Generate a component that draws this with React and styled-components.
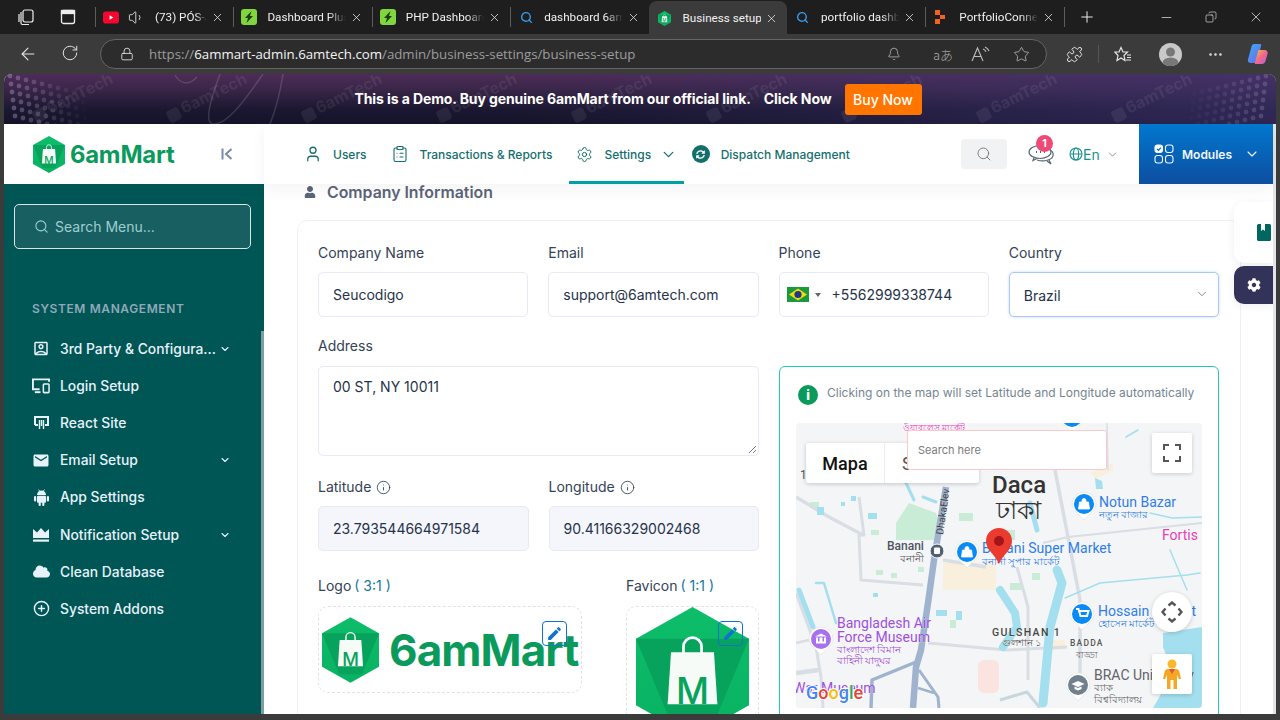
import React from 'react';
import styled, { createGlobalStyle } from 'styled-components';
import {
  ArrowLeft, Bell, ChevronDown, CirclePlus, ClipboardList, Copy, Ellipsis, Info, Lock, Minus,
  Plus, Puzzle, RotateCw, Search, Settings, Star, User, Volume1, X,
} from 'lucide-react';
import { FaCloud, FaCog, FaSyncAlt, FaUser } from 'react-icons/fa';
import { MdEdit, MdEmail, MdOutlineAccountBox } from 'react-icons/md';

const GlobalStyle = createGlobalStyle`
  html, body { margin: 0; padding: 0; height: 100%; overflow: hidden; background: #3b3b3b; }
  * { box-sizing: border-box; }
  body { font-family: Inter, "Liberation Sans", sans-serif; }
`;

const Window = styled.div`
  width: 1280px;
  height: 720px;
  display: flex;
  flex-direction: column;
  background: #3b3b3b;
  overflow: hidden;
`;

/* browser chrome */
const TabStrip = styled.div`
  height: 34px;
  flex: none;
  display: flex;
  align-items: center;
  background: #1e1e1e;
  color: #f1f1f1;
  font-family: Roboto, "Noto Sans", sans-serif;
  font-size: 11.7px;
`;
const StripIcons = styled.div`
  width: 95px;
  flex: none;
  display: flex;
  gap: 25px;
  padding-left: 17px;
  align-items: center;
`;
const TabItem = styled.div`
  width: 138.4px;
  height: ${p => (p.$active ? '34px' : '20px')};
  margin-top: ${p => (p.$active ? '2px' : '0')};
  flex: none;
  display: flex;
  align-items: center;
  gap: 8px;
  padding: 0 9px 0 7px;
  background: ${p => (p.$active ? '#3b3b3b' : 'transparent')};
  border-radius: ${p => (p.$active ? '8px 8px 0 0' : '0')};
  border-left: 1px solid ${p => (p.$sep ? '#5c5c5c' : 'transparent')};
`;
const TabTitle = styled.span`
  flex: 1;
  min-width: 0;
  white-space: nowrap;
  overflow: hidden;
  margin: 0 -4px 0 2px;
  -webkit-mask-image: ${p => (p.$fade ? 'linear-gradient(90deg, #000 78%, transparent)' : 'none')};
`;
const FavIcon = styled.span`
  width: 16px;
  height: 16px;
  flex: none;
  display: flex;
  align-items: center;
  justify-content: center;
`;
const SpeakerIcon = styled(Volume1)`
  flex: none;
  margin-left: 1px;
`;
const CloseIcon = styled(X)`
  flex: none;
`;
const RestoreIcon = styled(Copy)`
  transform: scaleX(-1);
`;
const WinControls = styled.div`
  margin-left: auto;
  display: flex;
  align-items: center;
  gap: 31px;
  padding-right: 16px;
`;
const NewTab = styled.div`
  padding-left: 13px;
  border-left: 1px solid #5c5c5c;
  height: 20px;
  display: flex;
  align-items: center;
`;
const Toolbar = styled.div`
  height: 40px;
  flex: none;
  display: flex;
  align-items: center;
  padding: 0 10px 0 18px;
  color: #e6e6e6;
`;
const NavIcons = styled.div`
  width: 82px;
  display: flex;
  gap: 23px;
`;
const UrlPill = styled.div`
  width: 947px;
  height: 30px;
  flex: none;
  display: flex;
  align-items: center;
  padding: 0 16px 0 19px;
  border: 1px solid #656565;
  border-radius: 15px;
  background: #2c2c2c;
  font-family: "Open Sans", "Noto Sans", sans-serif;
  font-size: 13.25px;
  color: #9c9c9c;
`;
const UrlText = styled.span`
  margin-left: 15px;
  flex: 1;
  white-space: nowrap;
  b { font-weight: 400; color: #f4f4f4; }
`;
const UrlActions = styled.div`
  display: flex;
  align-items: center;
  gap: 20px;
  color: #bdbdbd;
`;
const TranslateGlyph = styled.span`
  font-family: "Noto Sans CJK JP", sans-serif;
  font-size: 13px;
  font-weight: 300;
  width: 18px;
  margin-left: 12px;
  white-space: nowrap;
  color: #a8a8a8;
`;
const ToolSlot = styled.span`
  display: flex;
  flex: none;
  margin-left: ${p => p.$ml}px;
`;
const ToolSep = styled.span`
  width: 1px;
  height: 18px;
  margin-left: 15px;
  background: #555;
`;
const Avatar = styled.span`
  width: 23px;
  height: 23px;
  margin-left: 27px;
  border-radius: 50%;
  background: #c9c9c9;
  flex: none;
  display: flex;
  align-items: center;
  justify-content: center;
  overflow: hidden;
`;

/* page */
const Viewport = styled.div`
  flex: 1;
  min-height: 0;
  margin: 0 4px 6px;
  display: flex;
  flex-direction: column;
  overflow: hidden;
  border-radius: 8px 8px 0 0;
  background: #fff;
`;
const Banner = styled.div`
  position: relative;
  height: 50px;
  flex: none;
  display: flex;
  align-items: center;
  justify-content: center;
  gap: 13px;
  padding-right: 4px;
  overflow: hidden;
  background:
    linear-gradient(90deg, transparent 40%, rgba(62, 52, 112, 0.6) 100%),
    linear-gradient(180deg, #4d2c58 0%, #3a2648 30%, #1a1730 72%, #15132a 100%);
  color: #fff;
  font-size: 14px;
  font-weight: 700;
`;
const BannerArt = styled.svg`
  position: absolute;
  inset: 0;
`;
const BannerText = styled.span`
  position: relative;
  display: flex;
  gap: 13px;
  padding-bottom: 1px;
  letter-spacing: -0.1px;
`;
const BuyNow = styled.span`
  position: relative;
  width: 77px;
  height: 31px;
  display: flex;
  align-items: center;
  justify-content: center;
  background: #ff7500;
  border-radius: 3px;
  font-size: 14px;
  font-weight: 500;
`;
const Shell = styled.div`
  flex: 1;
  min-height: 0;
  display: flex;
`;
const Side = styled.aside`
  width: 260px;
  flex: none;
  display: flex;
  flex-direction: column;
`;
const Brand = styled.div`
  height: 60px;
  flex: none;
  display: flex;
  align-items: center;
  padding-left: 29px;
  gap: 5px;
  background: #fff;
  color: #7b8aa8;
`;
const BrandName = styled.span`
  font-size: 23.8px;
  font-weight: 700;
  color: #0a9a5c;
  letter-spacing: -0.2px;
  width: 144px;
`;
const SideBody = styled.div`
  position: relative;
  flex: 1;
  background: #005555;
  padding: 20px 13px 0 10px;
  overflow: hidden;
`;
const SideBar = styled.span`
  position: absolute;
  right: 0;
  top: 147px;
  bottom: 0;
  width: 3px;
  background: #7c9ea2;
`;
const SideSearch = styled.div`
  height: 45px;
  display: flex;
  align-items: center;
  gap: 6px;
  padding-left: 19px;
  border: 1px solid #d9e6e6;
  border-radius: 5px;
  background: #175f60;
  color: #9fcdd0;
  font-size: 14px;
`;
const SideTitle = styled.div`
  margin: 52px 0 13px 18px;
  font-size: 12px;
  line-height: 16px;
  font-weight: 600;
  letter-spacing: 0.6px;
  color: #8fa9b8;
`;
const SideItem = styled.div`
  height: 37.2px;
  display: flex;
  align-items: center;
  padding-left: 18px;
  color: #e8f2fb;
  font-size: 13.85px;
  font-weight: 500;
`;
const SideIcon = styled.span`
  width: 18px;
  height: 18px;
  margin-right: 10px;
  flex: none;
  display: flex;
  align-items: center;
  justify-content: center;
`;
const SideLabel = styled.span`
  flex: 1;
`;
const SideChevron = styled.span`
  width: 12px;
  margin-right: 20px;
  display: flex;
`;
const Main = styled.div`
  position: relative;
  flex: 1;
  min-width: 0;
  display: flex;
  flex-direction: column;
  border-right: 3px solid #e2e4e7;
`;
const TopNav = styled.nav`
  position: relative;
  z-index: 2;
  height: 60px;
  flex: none;
  display: flex;
  align-items: center;
  background: #fff;
  box-shadow: 0 6px 14px rgba(30, 40, 60, 0.05);
`;
const NavLinks = styled.div`
  display: flex;
  align-items: stretch;
  height: 60px;
  padding-left: 40px;
`;
const NavLink = styled.div`
  display: flex;
  align-items: center;
  gap: 11px;
  margin-right: ${p => p.$mr || 0}px;
  padding: ${p => (p.$active ? '0 6.5px 0 7px' : '0')};
  border-bottom: 3px solid ${p => (p.$active ? '#00a0a5' : 'transparent')};
  border-top: 3px solid transparent;
  color: #146f6c;
  font-size: 12px;
  font-weight: 500;
  white-space: nowrap;
`;
const SettingsChevron = styled(ChevronDown)`
  margin-left: -2px;
`;
const DispatchDot = styled.span`
  width: 18px;
  height: 18px;
  border-radius: 50%;
  background: #146f6c;
  color: #fff;
  display: flex;
  align-items: center;
  justify-content: center;
`;
const HeaderTools = styled.div`
  margin-left: auto;
  display: flex;
  align-items: center;
  height: 60px;
`;
const SearchBtn = styled.span`
  width: 46px;
  height: 30px;
  margin-right: 21px;
  border-radius: 4px;
  background: #f1f2f4;
  color: #7a7f87;
  display: flex;
  align-items: center;
  justify-content: center;
`;
const ChatWrap = styled.span`
  position: relative;
  width: 28px;
  height: 24px;
  margin-right: 13px;
  margin-top: 4px;
`;
const Badge = styled.span`
  position: absolute;
  top: -9px;
  left: 8px;
  width: 17px;
  height: 17px;
  border-radius: 50%;
  background: #ef4a75;
  color: #fff;
  font-size: 10.5px;
  font-weight: 700;
  display: flex;
  align-items: center;
  justify-content: center;
`;
const Lang = styled.span`
  display: flex;
  align-items: center;
  color: #16938f;
  font-size: 14px;
  width: 70px;
`;
const LangChevron = styled.span`
  margin-left: 6px;
  color: #6f7a86;
  display: flex;
`;
const Modules = styled.div`
  width: 134px;
  height: 60px;
  display: flex;
  align-items: center;
  padding-left: 15px;
  gap: 8px;
  background: linear-gradient(180deg, #0178cf, #0d4ea0);
  color: #f2f8ff;
  font-size: 12px;
  font-weight: 600;
`;
const ModulesChevron = styled.span`
  margin-left: 4px;
  display: flex;
`;
const Content = styled.div`
  position: relative;
  flex: 1;
  min-height: 0;
  overflow: hidden;
  padding: 0 32px 0 33px;
  background: #fff;
`;
const SectionTitle = styled.div`
  display: flex;
  align-items: center;
  gap: 11px;
  height: 20px;
  margin: -2px 0 18px 7px;
  color: #5b6478;
  font-size: 15.85px;
  font-weight: 600;
`;
const Card = styled.section`
  border: 1px solid #eef0f5;
  border-radius: 10px;
  padding: 22px 21px 0 20px;
`;
const FourCols = styled.div`
  display: grid;
  grid-template-columns: repeat(4, 1fr);
  gap: 20px;
`;
const TwoCols = styled.div`
  display: grid;
  grid-template-columns: 1fr 1fr;
  gap: 20px;
  margin-top: ${p => p.$mt || 0}px;
`;
const Label = styled.div`
  height: 20px;
  margin-bottom: ${p => p.$mb ?? 9}px;
  line-height: 20px;
  display: flex;
  align-items: center;
  gap: 5px;
  font-size: 14px;
  color: #334257;
  white-space: nowrap;
`;
const Ratio = styled.span`
  color: #16789a;
  margin-left: -2px;
`;
const Input = styled.div`
  position: relative;
  height: ${p => p.$h || 45}px;
  display: flex;
  align-items: ${p => (p.$top ? 'flex-start' : 'center')};
  padding: ${p => (p.$top ? '11px 14px' : p.$focus ? '2px 14px 0' : '0 14px')};
  border: 1px solid ${p => (p.$focus ? '#a9c7f7' : '#e7eaf3')};
  border-radius: 5px;
  background: ${p => (p.$muted ? '#f4f6fb' : '#fff')};
  box-shadow: ${p => (p.$focus ? '0 0 3px rgba(90,150,250,.35)' : 'none')};
  font-size: 14px;
  color: #26324a;
  white-space: nowrap;
`;
const PhoneInput = styled(Input)`
  padding-left: 7px;
  gap: 6px;
`;
const Grip = styled.svg`
  position: absolute;
  right: 1px;
  bottom: 1px;
`;
const Caret = styled.span`
  width: 0;
  height: 0;
  margin-right: 5px;
  border: 3px solid transparent;
  border-top: 4px solid #666;
  border-bottom: 0;
`;
const SelectChevron = styled.span`
  margin-left: auto;
  margin-right: -5px;
  margin-top: -3px;
  color: #6f7a86;
  display: flex;
`;
const ImageRow = styled.div`
  display: flex;
  gap: 44px;
  margin-top: 25px;
`;
const DropBox = styled.div`
  position: relative;
  width: ${p => p.$w}px;
  height: ${p => p.$h}px;
  display: flex;
  align-items: ${p => (p.$top ? 'flex-start' : 'center')};
  justify-content: ${p => (p.$top ? 'center' : 'flex-start')};
  padding-left: ${p => (p.$top ? '0' : '3px')};
  gap: 10px;
  border: 1px dashed #e2e2e2;
  border-radius: 10px;
`;
const LogoWord = styled.span`
  font-size: 44px;
  font-weight: 700;
  color: #0a9a5c;
  letter-spacing: -0.9px;
  line-height: 1;
`;
const EditBtn = styled.span`
  position: absolute;
  top: 14px;
  right: ${p => p.$right}px;
  width: 25px;
  height: 25px;
  border: 1px solid #1073d0;
  border-radius: 4px;
  color: #1073d0;
  display: flex;
  align-items: center;
  justify-content: center;
`;
const MapCard = styled.div`
  height: 400px;
  margin-top: 30px;
  padding: 16px;
  border: 1px solid #1fcdb0;
  border-radius: 6px;
`;
const MapHint = styled.div`
  height: 24px;
  margin: 0 0 16px 2px;
  display: flex;
  align-items: center;
  gap: 9px;
  color: #758590;
  font-size: 12px;
  white-space: nowrap;
`;
const HintText = styled.span`
  padding-bottom: 6px;
`;
const InfoDot = styled.span`
  width: 20px;
  height: 20px;
  border-radius: 50%;
  background: #0a9a5c;
  color: #fff;
  flex: none;
  display: flex;
  align-items: center;
  justify-content: center;
  font-size: 13px;
  font-weight: 800;
`;
const MapBox = styled.div`
  position: relative;
  height: 285px;
  overflow: hidden;
  border-radius: 4px;
  background: #f4f5f6;
  font-family: Roboto, "Liberation Sans", sans-serif;
`;
const MapCanvas = styled.svg`
  display: block;
`;
const MapTypes = styled.div`
  position: absolute;
  left: 10px;
  top: 20px;
  width: 173px;
  height: 40px;
  display: flex;
  align-items: center;
  background: #fff;
  box-shadow: 0 1px 4px rgba(0, 0, 0, 0.2);
  border-radius: 2px;
  font-size: 18px;
  color: #111;
`;
const MapType = styled.span`
  width: 79px;
  height: 40px;
  display: flex;
  align-items: center;
  justify-content: center;
  font-weight: ${p => (p.$on ? 500 : 400)};
  border-right: 1px solid #ececec;
`;
const MapSatellite = styled.span`
  padding-left: 17px;
  color: #555;
`;
const MapSearch = styled.div`
  position: absolute;
  left: 111px;
  top: 7px;
  width: 200px;
  height: 40px;
  display: flex;
  align-items: center;
  padding-left: 10px;
  background: #fff;
  border: 1px solid #fbc9c9;
  border-radius: 3px;
  font-family: Inter, sans-serif;
  font-size: 11px;
  color: #7b7b7b;
`;
const MapBtn = styled.span`
  position: absolute;
  left: 356px;
  top: ${p => p.$top}px;
  width: 40px;
  height: 40px;
  display: flex;
  align-items: center;
  justify-content: center;
  background: #fff;
  border-radius: ${p => (p.$round ? '50%' : '2px')};
  box-shadow: 0 1px 4px rgba(0, 0, 0, 0.18);
`;
const FloatPanel = styled.div`
  position: absolute;
  right: 0;
  top: ${p => p.$top}px;
  width: 39px;
  height: ${p => p.$h}px;
  display: flex;
  align-items: center;
  justify-content: ${p => (p.$end ? 'flex-end' : 'center')};
  padding-right: ${p => (p.$end ? '2px' : '0')};
  border-radius: 10px 0 0 10px;
  background: ${p => p.$bg};
  color: ${p => p.$fg};
  box-shadow: 0 2px 8px rgba(30, 40, 60, 0.08);
`;
const HexSvg = styled.svg`
  flex: none;
`;

function HexLogo({ w, h }) {
  const id = `hex${w}`;
  return (
    <HexSvg width={w} height={h} viewBox="0 0 100 115">
      <defs>
        <linearGradient id={id} x1="0" y1="0" x2="0" y2="1">
          <stop offset="0" stopColor="#0dbd69" />
          <stop offset="1" stopColor="#08b262" />
        </linearGradient>
      </defs>
      <polygon points="50,0 100,28 100,87 50,115 0,87 0,28" fill={`url(#${id})`} />
      <polygon points="0,28 100,28 70,100 30,100" fill="#07a35c" />
      <path d="M42 42 V35 a8 8 0 0 1 16 0 V42" fill="none" stroke="#fff" strokeWidth="2.4" />
      <polygon points="31,40 69,40 72,86 28,86" fill="#f6fbf8" />
      <text x="50" y="86" textAnchor="middle" fontFamily="Inter, sans-serif" fontWeight="500" fontSize="32" fill="#07a35c">M</text>
    </HexSvg>
  );
}

function CopilotIcon() {
  return (
    <svg width="24" height="24" viewBox="0 0 24 24">
      <defs>
        <linearGradient id="copA" x1="0" y1="0" x2="1" y2="1">
          <stop offset="0" stopColor="#2fb6f0" />
          <stop offset="1" stopColor="#7a5cf0" />
        </linearGradient>
        <linearGradient id="copB" x1="0" y1="0" x2="1" y2="1">
          <stop offset="0" stopColor="#f5c332" />
          <stop offset="0.5" stopColor="#f0698a" />
          <stop offset="1" stopColor="#b25ce0" />
        </linearGradient>
      </defs>
      <path d="M8 2 h6 c1 0 1.5.6 1.2 1.6 L11 19 c-.4 1.4-1.2 2-2.4 2 H5 c-2.5 0-3.6-1.6-3-3.6 L5.5 4.5 C6 3 6.8 2 8 2z" fill="url(#copA)" />
      <path d="M13 8 h5 c2.5 0 4.2 1.6 3.6 3.8 L19.5 19 c-.5 1.8-1.8 3-3.6 3 H10 c-1 0-1.4-.7-1-1.6 L12 9.5 C12.2 8.6 12.4 8 13 8z" fill="url(#copB)" />
    </svg>
  );
}

const MapText = ({ x, y, c = '#2f7de8', s = 14, w = 400, ls, children }) => (
  <text x={x} y={y} fill={c} fontSize={s} fontWeight={w} letterSpacing={ls} stroke="#fff" strokeWidth="0.25" paintOrder="stroke">{children}</text>
);

const MapPin = ({ x, y, c, glyph }) => (
  <g transform={`translate(${x} ${y})`}>
    <path d="M-12 0 a12 12 0 1 1 24 0 c0 6-7 10-12 16 c-5-6-12-10-12-16z" fill="#fff" stroke="#d8d8d8" strokeWidth="0.5" />
    <circle r="10" fill={c} />
    {glyph === 'bag' && <path d="M-4.5 -2 h9 l1 7 h-11z M-2 -2 v-1.5 a2 2 0 0 1 4 0 v1.5" fill="#fff" stroke="#fff" strokeWidth="0.8" />}
    {glyph === 'cart' && <path d="M-6 -5 h2.5 l2 7 h6.5 l1.5-5 h-9 M-1.5 5 h.1 M3.5 5 h.1" fill="none" stroke="#fff" strokeWidth="2" />}
    {glyph === 'museum' && <path d="M-5 4.5 h10 v-6 h-2 v4 h-1.5 v-4 h-3 v4 h-1.5 v-4 h-2z M-6 -2.5 l6-3 l6 3z" fill="#fff" />}
    {glyph === 'school' && <path d="M-6.5 -1 l6.5-3 l6.5 3 l-6.5 3z M-3.5 1.5 v2.5 l3.5 1.5 l3.5-1.5 v-2.5 l-3.5 1.5z" fill="#fff" />}
  </g>
);

function MapArt() {
  return (
    <MapCanvas width="406" height="285" viewBox="0 0 406 285">
      {/* land use */}
      <polygon points="100,100 113,80 140,90 143,100 138,117 100,117" fill="#c8ecd5" />
      <rect x="147" y="140" width="53" height="27" fill="#f8efdc" />
      <rect x="182" y="237" width="21" height="33" rx="6" fill="#fbe3df" />
      <rect x="257" y="217" width="12" height="10" fill="#f8efdc" />
      <polygon points="294,50 317,40 317,47 300,56" fill="#f8efdc" />
      <g fill="#c8ecd5">
        <rect x="163" y="90" width="14" height="8" /><rect x="205" y="107" width="14" height="10" />
        <rect x="80" y="147" width="7" height="5" /><rect x="95" y="150" width="6" height="5" />
        <rect x="122" y="144" width="6" height="5" /><rect x="75" y="107" width="8" height="5" />
        <rect x="14" y="79" width="9" height="6" /><rect x="214" y="160" width="13" height="7" />
        <rect x="236" y="150" width="8" height="7" /><rect x="154" y="197" width="6" height="8" />
      </g>
      {/* grey roads */}
      <g fill="none" stroke="#d8dee4" strokeWidth="2.5" strokeLinejoin="round">
        <polyline points="0,74 33,94 67,112" strokeWidth="3.5" />
        <polyline points="63,74 68,112 63,112 65,157 127,162" strokeWidth="3" />
        <polyline points="259,47 272,114 284,177 284,250" strokeWidth="3.5" />
        <polyline points="147,137 190,144" strokeWidth="3.5" />
        <polyline points="247,120 272,114 406,100" strokeWidth="2" />
        <polyline points="132,220 210,227 271,224" strokeWidth="3" />
        <polyline points="221,144 232,184 232,257" strokeWidth="3" />
        <polyline points="0,170 20,224 25,254 27,285" strokeWidth="3" />
        <polyline points="0,250 23,247" strokeWidth="4.5" />
        <polyline points="0,220 13,217" strokeWidth="2.5" />
        <polyline points="311,0 312,47" strokeWidth="1.5" />
      </g>
      {/* water */}
      <g fill="none" stroke="#a3dfee" strokeLinejoin="round" strokeLinecap="round">
        <polyline points="234,80 241,107" strokeWidth="5" />
        <polyline points="204,167 219,190 221,204 207,224" strokeWidth="8" />
        <polyline points="261,147 266,160 254,204 247,280" strokeWidth="9" />
        <polyline points="269,175 304,160 391,152 404,150" strokeWidth="1.5" />
        <polyline points="354,90 376,95 406,94" strokeWidth="1.5" />
        <polyline points="374,127 391,167" strokeWidth="1.5" />
        <polyline points="20,160 28,160 40,200" strokeWidth="2.5" />
        <polyline points="3,167 17,204" strokeWidth="5" />
        <polyline points="330,14 342,7" strokeWidth="1.5" />
        <polyline points="110,60 118,77" strokeWidth="3" />
        <polyline points="127,74 140,79" strokeWidth="3" />
      </g>
      <polygon points="367,210 406,204 406,285 357,285 377,250 367,224" fill="#a3dfee" />
      <polygon points="299,55 306,58 307,66 300,66" fill="#a3dfee" />
      <g fill="#a3dfee">
        <rect x="72" y="90" width="9" height="6" /><rect x="21" y="84" width="7" height="8" />
        <rect x="45" y="79" width="4" height="4" /><rect x="55" y="73" width="5" height="5" />
        <rect x="77" y="170" width="5" height="4" /><rect x="160" y="188" width="6" height="9" />
        <rect x="140" y="187" width="11" height="6" />
      </g>
      {/* elevated expressway */}
      <g fill="none" stroke="#9fb3cf" strokeLinejoin="round">
        <polyline points="150,64 138,137 132,180 125,227 120,244 117,285" strokeWidth="6.5" />
        <polyline points="120,239 76,257 75,285" strokeWidth="3.5" />
        <polyline points="123,247 142,274 143,285" strokeWidth="3" />
        <polyline points="122,265 138,270" strokeWidth="2.5" />
        <polyline points="108,0 125,-8" strokeWidth="4" />
        <polyline points="204,277 231,269 244,285" strokeWidth="3" stroke="#c8d6de" />
      </g>
      <text transform="translate(147 112) rotate(-82)" fontSize="10" fill="#444">DhakaElev</text>
      <text x="4" y="56" fontSize="12" fill="#555">1</text>

      <MapText x={107} y={8} c="#e83eb5" s={9}>ওয়ারলেস মার্কেট</MapText>
      <MapPin x={276} y={-6} c="#0a8af5" glyph="bag" />

      <text x="196" y="70" fontSize="24" fontWeight="500" fill="#333">Daca</text>
      <text x="200" y="96" fontSize="25" fill="#333">ঢাকা</text>

      <MapPin x={288} y={81} c="#0a8af5" glyph="bag" />
      <MapText x={303} y={84}>Notun Bazar</MapText>
      <MapText x={303} y={95} s={10}>নতুন বাজার</MapText>
      <MapText x={366} y={117} c="#e83eb5">Fortis</MapText>

      <MapText x={91} y={127} c="#4a5560" s={12} w={500}>Banani</MapText>
      <MapText x={104} y={139} c="#555" s={10}>বনানী</MapText>
      <circle cx="141" cy="128" r="7" fill="#4f6272" stroke="#fff" />
      <rect x="138" y="124.5" width="6" height="6.5" rx="1" fill="#fff" />

      <MapPin x={171} y={129} c="#0a8af5" glyph="bag" />
      <MapText x={186} y={130}>Banani Super Market</MapText>
      <MapText x={186} y={142} s={10}>বনানী সুপার মার্কেট</MapText>

      <path d="M203 141 C199 131 190 127 190 118 a13 13 0 0 1 26 0 C216 127 207 131 203 141z" fill="#ea3b2e" />
      <circle cx="203" cy="118" r="5" fill="#a5141a" />

      <MapPin x={286} y={191} c="#0a8af5" glyph="cart" />
      <MapText x={302} y={193}>Hossain Market</MapText>
      <MapText x={302} y={204} s={10}>হোসেন মার্কেট</MapText>

      <MapPin x={25} y={216} c="#a970ee" glyph="museum" />
      <MapText x={41} y={205} c="#9c4fe0">Bangladesh Air</MapText>
      <MapText x={41} y={219} c="#9c4fe0">Force Museum</MapText>
      <MapText x={41} y={230} c="#9c4fe0" s={10}>বাংলাদেশ বিমান</MapText>
      <MapText x={41} y={241} c="#9c4fe0" s={10}>বাহিনী যাদুঘর</MapText>

      <MapText x={196} y={213} c="#444" s={10.5} w={500} ls={1.4}>GULSHAN 1</MapText>
      <MapText x={206} y={223} c="#555" s={10}>গুলশান ১</MapText>
      <MapText x={274} y={223} c="#555" s={8.5} w={500} ls={1.2}>BADDA</MapText>
      <MapText x={280} y={235} c="#666" s={9}>বাড্ডা</MapText>

      <MapPin x={282} y={262} c="#70808c" glyph="school" />
      <MapText x={298} y={257} c="#5f6368">BRAC University</MapText>
      <MapText x={298} y={268} c="#5f6368" s={10}>ব্যাক</MapText>
      <MapText x={298} y={280} c="#5f6368" s={10}>বিশ্ববিদ্যালয়</MapText>

      <MapText x={-3} y={270} c="#9c4fe0">War Museum</MapText>
      <text x="10" y="276" fontSize="18" fontWeight="500" stroke="#fff" strokeWidth="2" paintOrder="stroke">
        <tspan fill="#4285f4">G</tspan><tspan fill="#ea4335">o</tspan><tspan fill="#fbbc05">o</tspan><tspan fill="#4285f4">g</tspan><tspan fill="#34a853">l</tspan><tspan fill="#ea4335">e</tspan>
      </text>
    </MapCanvas>
  );
}

function BannerBackdrop() {
  const marks = [46, 180, 315, 450, 585, 720, 855, 990, 1125];
  const rows = [0, 1, 2, 3, 4, 5];
  const cols = [0, 1, 2, 3, 4, 5, 6, 7, 8, 9];
  return (
    <BannerArt width="1272" height="50" viewBox="0 0 1272 50">
      {rows.map(r => cols.map(c => (
        <circle key={`l${r}${c}`} cx={6 + c * 8 + r} cy={2 + r * 8 + c * 2} r="2.4" fill="#c9b8e0" opacity={Math.max(0.02, 0.34 - c * 0.035)} />
      )))}
      {rows.map(r => cols.map(c => (
        <circle key={`r${r}${c}`} cx={1262 - c * 8 - r} cy={2 + r * 8 + c * 2} r="2.4" fill="#c9b8e0" opacity={Math.max(0.02, 0.22 - c * 0.022)} />
      )))}
      <g fill="none" stroke="#ffffff" strokeOpacity="0.14" strokeWidth="1.5">
        <path d="M171 1 C176 10 185 12 193 3" />
        <path d="M216 0 C205 30 200 50 210 50 C225 50 245 20 259 0" />
        <path d="M279 0 C276 20 272 35 266 50" />
      </g>
      <g fill="#ffffff" opacity="0.07" fontSize="16" fontWeight="700" fontFamily="Inter, sans-serif">
        {marks.map(x => (
          <g key={x} transform={`translate(${x} 40) rotate(-26)`}>
            <rect x="-16" y="-10" width="13" height="13" rx="3" />
            <text x="0" y="0">6amTech</text>
          </g>
        ))}
      </g>
    </BannerArt>
  );
}

const tabs = [
  { title: '(73) PÓS-JAVA', icon: 'yt', sep: true },
  { title: 'Dashboard Plus', icon: 'env', sep: true },
  { title: 'PHP Dashboard', icon: 'env', sep: true },
  { title: 'dashboard 6am', icon: 'search', sep: true },
  { title: 'Business setup', icon: 'six', active: true },
  { title: 'portfolio dashb', icon: 'search' },
  { title: 'PortfolioConne', icon: 'pc', sep: true },
];

function TabIcon({ kind }) {
  if (kind === 'search') return <Search size={13} color="#3b9bea" strokeWidth={2.6} />;
  if (kind === 'six') return <HexLogo w={13} h={15} />;
  if (kind === 'yt') {
    return (
      <svg width="17" height="13" viewBox="0 0 17 13">
        <rect width="17" height="13" rx="3" fill="#f5072f" />
        <polygon points="7,4 11,6.5 7,9" fill="#fff" />
      </svg>
    );
  }
  if (kind === 'env') {
    return (
      <svg width="16" height="16" viewBox="0 0 16 16">
        <rect width="16" height="16" rx="3" fill="#82d63d" />
        <path d="M10.5 2 L4 9 h3 l-1.5 5 L12 7 h-3z" fill="#1f3d12" />
      </svg>
    );
  }
  return (
    <svg width="12" height="14" viewBox="0 0 12 14">
      <rect x="0" y="0" width="5" height="5" fill="#f26322" /><rect x="5" y="5" width="5" height="4" fill="#f26322" /><rect x="0" y="9" width="5" height="5" fill="#f26322" />
    </svg>
  );
}

const menu = [
  { label: '3rd Party & Configura...', icon: <MdOutlineAccountBox size={19} />, more: true },
  { label: 'Login Setup', icon: (
    <svg width="19" height="16" viewBox="0 0 19 16" fill="none" stroke="currentColor">
      <path d="M8 11.5 H1 V1 H18 V3.5" strokeWidth="2" /><path d="M3 14.5 H9" strokeWidth="2" />
      <rect x="12" y="6" width="6" height="9" rx="0.8" strokeWidth="1.6" />
    </svg>
  ) },
  { label: 'React Site', icon: (
    <svg width="17" height="15" viewBox="0 0 17 15" fill="none" stroke="currentColor" strokeWidth="2">
      <path d="M2 10 V2 h13 v8 h-3 M2 10 h3" /><path d="M6.5 5 v9 M10.5 5 v9 M8.5 5 v6" strokeWidth="1.4" />
    </svg>
  ) },
  { label: 'Email Setup', icon: <MdEmail size={19} />, more: true },
  { label: 'App Settings', icon: (
    <svg width="15" height="17" viewBox="0 0 15 17" fill="currentColor">
      <path d="M3 6 a4.5 4.5 0 0 1 9 0z" /><rect x="3" y="6.8" width="9" height="7" rx="1" />
      <rect x="0" y="7" width="2.2" height="5.5" rx="1.1" /><rect x="12.8" y="7" width="2.2" height="5.5" rx="1.1" />
      <rect x="4.6" y="13" width="2.2" height="4" rx="1" /><rect x="8.2" y="13" width="2.2" height="4" rx="1" />
      <path d="M4.5 0.5 L6 2.5 M10.5 0.5 L9 2.5" stroke="currentColor" strokeWidth="0.8" />
    </svg>
  ) },
  { label: 'Notification Setup', icon: (
    <svg width="16" height="14" viewBox="0 0 16 14" fill="currentColor">
      <path d="M0 1 L4 4.5 L8 0 L12 4.5 L16 1 V10 H0z" /><rect y="11.5" width="16" height="2.2" />
    </svg>
  ), more: true },
  { label: 'Clean Database', icon: <FaCloud size={17} /> },
  { label: 'System Addons', icon: <CirclePlus size={17} strokeWidth={2} /> },
];

export default function App() {
  return (
    <Window>
      <GlobalStyle />
      <TabStrip>
        <StripIcons>
          <svg width="18" height="18" viewBox="0 0 18 18" fill="none" stroke="#eee" strokeWidth="1.2">
            <rect x="6" y="2" width="10" height="12" rx="2" /><path d="M4 4 v11 a1.5 1.5 0 0 0 1.5 1.5 H12" /><path d="M2 6 v8" />
          </svg>
          <svg width="16" height="16" viewBox="0 0 16 16" fill="none" stroke="#eee" strokeWidth="1.3">
            <rect x="1.5" y="1.5" width="13" height="13" rx="2" /><rect x="1.5" y="1.5" width="13" height="3" fill="#eee" />
          </svg>
        </StripIcons>
        {tabs.map(t => (
          <TabItem key={t.title} $active={t.active} $sep={t.sep}>
            <FavIcon><TabIcon kind={t.icon} /></FavIcon>
            {t.icon === 'yt' && <SpeakerIcon size={17} strokeWidth={1.2} />}
            <TabTitle $fade={!t.active}>{t.title}</TabTitle>
            <CloseIcon size={13} strokeWidth={1.4} />
          </TabItem>
        ))}
        <NewTab><Plus size={18} strokeWidth={1.3} /></NewTab>
        <WinControls>
          <Minus size={15} strokeWidth={1.1} />
          <RestoreIcon size={12} strokeWidth={1.2} />
          <X size={16} strokeWidth={1.1} />
        </WinControls>
      </TabStrip>
      <Toolbar>
        <NavIcons>
          <ArrowLeft size={20} strokeWidth={1.3} />
          <RotateCw size={18} strokeWidth={1.3} />
        </NavIcons>
        <UrlPill>
          <Lock size={14} strokeWidth={1.4} color="#eee" />
          <UrlText>https://<b>6ammart-admin.6amtech.com</b>/admin/business-settings/business-setup</UrlText>
          <UrlActions>
            <Bell size={14} strokeWidth={1.3} />
            <TranslateGlyph>aあ</TranslateGlyph>
            <svg width="22" height="16" viewBox="0 0 22 16" fill="none" stroke="currentColor" strokeWidth="1.1">
              <path d="M1 15 L6.5 2 L12 15 M3 10.5 h7" /><path d="M12 3 a4 4 0 0 1 3 3 M14 1 a7 7 0 0 1 4 4" />
            </svg>
            <Star size={17} strokeWidth={1.1} />
          </UrlActions>
        </UrlPill>
        <ToolSlot $ml={19}><Puzzle size={17} strokeWidth={1.4} /></ToolSlot>
        <ToolSep />
        <ToolSlot $ml={15}>
          <svg width="18" height="17" viewBox="0 0 18 17" fill="none" stroke="#e6e6e6" strokeWidth="1.2">
            <path d="M7 1.5 L9 6 h4.5 L10 9.5 L11 14.5 L7 12 L3 14.5 L4 9.5 L.8 6 H5z" /><path d="M13 9 h4 M13 11.5 h4 M12 14 h5" />
          </svg>
        </ToolSlot>
        <Avatar>
          <svg width="23" height="23" viewBox="0 0 23 23"><circle cx="11.5" cy="9" r="4.5" fill="#787878" /><ellipse cx="11.5" cy="20" rx="8" ry="5.5" fill="#787878" /></svg>
        </Avatar>
        <ToolSlot $ml={25}><Ellipsis size={17} strokeWidth={1.6} /></ToolSlot>
        <ToolSlot $ml={22}><CopilotIcon /></ToolSlot>
      </Toolbar>
      <Viewport>
        <Banner>
          <BannerBackdrop />
          <BannerText>
            <span>This is a Demo. Buy genuine 6amMart from our official link.</span>
            <span>Click Now</span>
          </BannerText>
          <BuyNow>Buy Now</BuyNow>
        </Banner>
        <Shell>
          <Side>
            <Brand>
              <HexLogo w={32} h={37} />
              <BrandName>6amMart</BrandName>
              <svg width="16" height="16" viewBox="0 0 16 16" fill="none" stroke="currentColor" strokeWidth="2">
                <path d="M3.5 2.5 v11" /><path d="M12.5 3 L7 8 L12.5 13" />
              </svg>
            </Brand>
            <SideBody>
              <SideBar />
              <SideSearch><Search size={15} strokeWidth={1.8} />Search Menu...</SideSearch>
              <SideTitle>SYSTEM MANAGEMENT</SideTitle>
              {menu.map(m => (
                <SideItem key={m.label}>
                  <SideIcon>{m.icon}</SideIcon>
                  <SideLabel>{m.label}</SideLabel>
                  {m.more && <SideChevron><ChevronDown size={12} strokeWidth={2.2} /></SideChevron>}
                </SideItem>
              ))}
            </SideBody>
          </Side>
          <Main>
            <TopNav>
              <NavLinks>
                <NavLink $mr={24}><User size={18} strokeWidth={1.7} />Users</NavLink>
                <NavLink $mr={17}><ClipboardList size={18} strokeWidth={1.5} />Transactions &amp; Reports</NavLink>
                <NavLink $active $mr={8}>
                  <Settings size={17} strokeWidth={1.4} />Settings
                  <SettingsChevron size={17} strokeWidth={1.8} />
                </NavLink>
                <NavLink><DispatchDot><FaSyncAlt size={9} /></DispatchDot>Dispatch Management</NavLink>
              </NavLinks>
              <HeaderTools>
                <SearchBtn><Search size={16} strokeWidth={1.5} /></SearchBtn>
                <ChatWrap>
                  <svg width="28" height="24" viewBox="0 0 28 24" fill="none" stroke="#5a6675" strokeWidth="1.2">
                    <ellipse cx="12" cy="8" rx="11" ry="6.5" fill="#fff" /><path d="M6 13.5 l-1 3 l4-2" />
                    <path d="M22 6 c4 2 5 8 -2 10 c-3 1-8 1-11 0" /><path d="M21 16 l2 4 l-4-3" />
                    <path d="M8 8 h1 M12 8 h1 M16 8 h1" strokeWidth="1.8" />
                  </svg>
                  <Badge>1</Badge>
                </ChatWrap>
                <Lang>
                  <svg width="14" height="14" viewBox="0 0 14 14" fill="none" stroke="currentColor" strokeWidth="1.1">
                    <circle cx="7" cy="7" r="6" /><ellipse cx="7" cy="7" rx="2.6" ry="6" /><path d="M1 7 h12" />
                  </svg>
                  En
                  <LangChevron><ChevronDown size={13} strokeWidth={1.5} /></LangChevron>
                </Lang>
                <Modules>
                  <svg width="20" height="20" viewBox="0 0 20 20" fill="none" stroke="currentColor" strokeWidth="1.1">
                    <rect x="1" y="1" width="7.5" height="7.5" rx="2.5" fill="#fff" />
                    <path d="M3 4.8 l1.5 1.5 l2.4-2.6" stroke="#0c63b8" strokeWidth="1.2" />
                    <rect x="11.5" y="1" width="7.5" height="7.5" rx="2.5" />
                    <rect x="1" y="11.5" width="7.5" height="7.5" rx="2.5" />
                    <rect x="11.5" y="11.5" width="7.5" height="7.5" rx="2.5" />
                  </svg>
                  Modules
                  <ModulesChevron><ChevronDown size={16} strokeWidth={1.7} /></ModulesChevron>
                </Modules>
              </HeaderTools>
            </TopNav>
            <Content>
              <SectionTitle><FaUser size={12} />Company Information</SectionTitle>
              <Card>
                <FourCols>
                  <div><Label>Company Name</Label><Input>Seucodigo</Input></div>
                  <div><Label>Email</Label><Input>support@6amtech.com</Input></div>
                  <div>
                    <Label>Phone</Label>
                    <PhoneInput>
                      <svg width="22" height="15" viewBox="0 0 22 15">
                        <rect width="22" height="15" fill="#1a9a3c" />
                        <polygon points="11,1.5 20,7.5 11,13.5 2,7.5" fill="#f5d90a" />
                        <circle cx="11" cy="7.5" r="3.6" fill="#1c3a8a" />
                      </svg>
                      <Caret />
                      +5562999338744
                    </PhoneInput>
                  </div>
                  <div>
                    <Label>Country</Label>
                    <Input $focus>Brazil<SelectChevron><ChevronDown size={14} strokeWidth={1.5} /></SelectChevron></Input>
                  </div>
                </FourCols>
                <TwoCols $mt={19}>
                  <div>
                    <Label $mb={10}>Address</Label>
                    <Input $h={90} $top>
                      00 ST, NY 10011
                      <Grip width="9" height="9" viewBox="0 0 9 9" stroke="#777" strokeWidth="1">
                        <path d="M1 8 L8 1 M5 8 L8 5" />
                      </Grip>
                    </Input>
                    <TwoCols $mt={21}>
                      <div>
                        <Label>Latitude <Info size={15} strokeWidth={1.4} /></Label>
                        <Input $muted>23.793544664971584</Input>
                      </div>
                      <div>
                        <Label>Longitude <Info size={15} strokeWidth={1.4} /></Label>
                        <Input $muted>90.41166329002468</Input>
                      </div>
                    </TwoCols>
                    <ImageRow>
                      <div>
                        <Label $mb={10}>Logo <Ratio>( 3:1 )</Ratio></Label>
                        <DropBox $w={264} $h={87}>
                          <HexLogo w={57} h={66} />
                          <LogoWord>6amMart</LogoWord>
                          <EditBtn $right={14}><MdEdit size={17} /></EditBtn>
                        </DropBox>
                      </div>
                      <div>
                        <Label $mb={10}>Favicon <Ratio>( 1:1 )</Ratio></Label>
                        <DropBox $w={133} $h={133} $top>
                          <HexLogo w={115} h={130} />
                          <EditBtn $right={15}><MdEdit size={17} /></EditBtn>
                        </DropBox>
                      </div>
                    </ImageRow>
                  </div>
                  <MapCard>
                    <MapHint>
                      <InfoDot>i</InfoDot>
                      <HintText>Clicking on the map will set Latitude and Longitude automatically</HintText>
                    </MapHint>
                    <MapBox>
                      <MapArt />
                      <MapTypes>
                        <MapType $on>Mapa</MapType>
                        <MapSatellite>Satélite</MapSatellite>
                      </MapTypes>
                      <MapSearch>Search here</MapSearch>
                      <MapBtn $top={10}>
                        <svg width="18" height="18" viewBox="0 0 18 18" fill="none" stroke="#555" strokeWidth="2">
                          <path d="M1 6 V1 h5 M12 1 h5 v5 M17 12 v5 h-5 M6 17 H1 v-5" />
                        </svg>
                      </MapBtn>
                      <MapBtn $top={169} $round>
                        <svg width="22" height="22" viewBox="0 0 22 22" fill="none" stroke="#555" strokeWidth="2.4">
                          <path d="M7.5 4.5 L11 1.5 L14.5 4.5 M7.5 17.5 L11 20.5 L14.5 17.5 M4.5 7.5 L1.5 11 L4.5 14.5 M17.5 7.5 L20.5 11 L17.5 14.5" />
                        </svg>
                      </MapBtn>
                      <MapBtn $top={231}>
                        <svg width="18" height="31" viewBox="0 0 18 31">
                          <circle cx="9" cy="5" r="4.5" fill="#fbb82e" />
                          <path d="M5 10 h8 c2 0 3 1 3.5 3 L18 20 h-2 l-2-4 v14 h-3.5 v-9 h-3 v9 H4 V16 l-2 4 H0 l1.5-7 C2 11 3 10 5 10z" fill="#f5a623" />
                          <path d="M6 10 L9 15 L12 10" fill="#e2562d" />
                        </svg>
                      </MapBtn>
                    </MapBox>
                  </MapCard>
                </TwoCols>
              </Card>
              <FloatPanel $top={18} $h={61} $bg="#fff" $fg="#00665f" $end>
                <svg width="14" height="17" viewBox="0 0 14 17">
                  <path d="M1.5 0 H4 V7 L6 5.5 L8 7 V0 H12.5 A1.5 1.5 0 0 1 14 1.5 V15.5 A1.5 1.5 0 0 1 12.5 17 H1.5 A1.5 1.5 0 0 1 0 15.5 V1.5 A1.5 1.5 0 0 1 1.5 0z" fill="currentColor" />
                </svg>
              </FloatPanel>
              <FloatPanel $top={82} $h={38} $bg="#333258" $fg="#fff"><FaCog size={14} /></FloatPanel>
            </Content>
          </Main>
        </Shell>
      </Viewport>
    </Window>
  );
}
